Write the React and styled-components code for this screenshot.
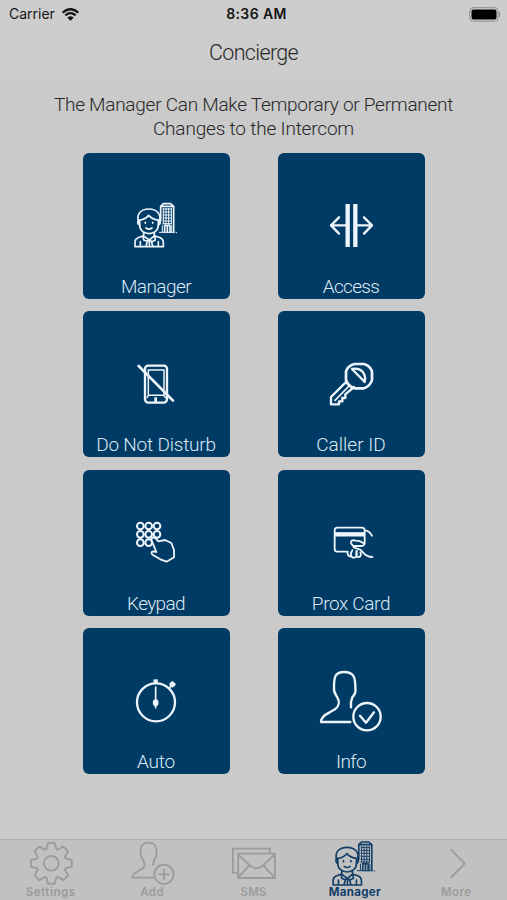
import React from "react";
import styled, { createGlobalStyle } from "styled-components";

const Global = createGlobalStyle`
  html, body { margin: 0; background: #cacaca; }
  * { box-sizing: border-box; }
`;

const Screen = styled.main`
  width: 507px;
  height: 900px;
  display: flex;
  flex-direction: column;
  background: #cacaca;
  color: #282828;
  font-family: Roboto, "Open Sans", sans-serif;
  font-weight: 300;
  overflow: hidden;
`;

const Header = styled.header`
  height: 80px;
  flex: none;
  background: #cdcdcd;
`;

const StatusBar = styled.div`
  height: 28px;
  padding: 0 6px 0 9px;
  display: grid;
  grid-template-columns: 1fr auto 1fr;
  align-items: center;
  color: #151515;
  font: 400 14px/28px Inter, sans-serif;
`;

const Carrier = styled.div`
  display: flex;
  align-items: center;
  gap: 7px;
`;

const Clock = styled.div`
  font-weight: 600;
  letter-spacing: 0.4px;
  padding-left: 3px;
`;

const BatterySlot = styled.div`
  display: flex;
  justify-content: flex-end;
`;

const Title = styled.h1`
  margin: 10px 0 0;
  text-align: center;
  font-size: 21.5px;
  line-height: 30px;
  font-weight: 300;
  letter-spacing: -0.65px;
`;

const Intro = styled.p`
  margin: 13px 0 0;
  text-align: center;
  font-size: 19px;
  line-height: 24px;
`;

const IntroLine = styled.span`
  display: block;
  white-space: nowrap;
  letter-spacing: ${(p) => p.$track}px;
`;

const Grid = styled.section`
  margin: 11.5px auto 0;
  display: grid;
  grid-template-columns: 147px 147px;
  grid-auto-rows: 146px;
  column-gap: 48px;
  row-gap: 12.5px;
`;

const Tile = styled.button`
  display: flex;
  flex-direction: column;
  align-items: center;
  justify-content: space-between;
  padding: ${(p) => p.$top}px 0 0;
  border: 0;
  border-radius: 6px;
  background: #003b66;
  color: #eef5fa;
  font: inherit;
`;

const TileLabel = styled.span`
  margin-bottom: -1px;
  color: #dce9f3;
  font-size: 19px;
  line-height: 26px;
  white-space: nowrap;
  letter-spacing: ${(p) => p.$track}px;
`;

const Glyph = styled.svg`
  display: block;
  flex: none;
  width: ${(p) => p.$w}px;
  height: ${(p) => p.$h}px;
  fill: none;
  stroke: currentColor;
  stroke-width: ${(p) => p.$stroke || 7};
  stroke-linejoin: round;
  stroke-linecap: round;
`;

const TabBar = styled.nav`
  margin-top: auto;
  height: 61px;
  flex: none;
  display: grid;
  grid-template-columns: repeat(5, 1fr);
  background: #c1c1c1;
  border-top: 1px solid #adadad;
`;

const Tab = styled.a`
  display: flex;
  flex-direction: column;
  align-items: center;
  color: ${(p) => (p.$active ? "#123f68" : "#9b9b9b")};
`;

const TabLabel = styled.span`
  margin-top: -2px;
  font: ${(p) => (p.$active ? 700 : 600)} 11.5px/14px Inter, sans-serif;
  letter-spacing: ${(p) => p.$track}px;
`;

const ManagerArt = () => (
  <g strokeWidth="5">
    <path d="M56 96c-8-24 7-39 31-39 23 0 38 15 31 39M56 90c-5 5-3 14 3 15M118 90c5 5 3 14-3 15" />
    <path d="M59 90c14-1 21-7 27-14 8 9 16 13 29 14v16c0 15-13 25-28 25s-28-10-28-25z" />
    <path d="M76 97v3M98 97v3M78 114q9 7 18 0" />
    <path d="M71 128v9l-17 6c-7 3-9 8-9 14v13h85v-13c0-7-3-11-9-14l-18-6v-9M69 137l19 13 16-13M69 137l2 13 10 4 7-4 8 5 10-5-2-13M82 154l-4 14M94 154l4 14M61 155v13M115 155v13M88 151v15" />
    <path d="M122 93V49l8-8h22l9 8v78M122 49h39M134 127v-21h16v21M142 107v20" />
    <path strokeWidth="3" d="M118 127h44M168 128h2M129 57h25M129 66h25M129 75h25M129 84h25M129 93h25M129 101h25M130 55v47M138 55v47M146 55v47M154 55v47M127 107v18M155 107v18" />
  </g>
);

const tiles = [
  {
    name: "Manager", track: -0.55, top: 37,
    art: <ManagerArt />,
  },
  {
    name: "Access", track: -0.65, top: 37,
    art: (
      <>
        <path strokeWidth="13" strokeLinecap="butt" d="M98 42v129M121 42v129" />
        <path d="M92 106H48M127 106h44M72 82l-24 24 24 25M147 82l24 24-24 25" />
      </>
    ),
  },
  {
    name: "Do Not Disturb", track: -0.2, top: 38.5,
    art: (
      <>
        <rect x="75" y="47" width="66" height="111" rx="10" />
        <path strokeWidth="4.5" d="M85 60h47v76H85zM85 137l-4 6M132 137l4 6" />
        <path strokeWidth="8" d="M107 145v10" />
        <path strokeWidth="8" d="M56 48l103 104" />
      </>
    ),
  },
  {
    name: "Caller ID", track: 0, top: 38.5,
    art: (
      <>
        <path strokeWidth="8" d="M118 42h29c14 4 20 10 24 22v26c-4 14-11 20-24 25h-29c-14-5-21-12-25-25V64c4-12 11-18 25-22z" />
        <path d="M111 57c26-6 44 13 38 39zM95 94l-47 47v22h24v-9h10v-10h9v-11l26-22" />
        <path strokeWidth="5" d="M60 151l42-43" />
      </>
    ),
  },
  {
    name: "Keypad", track: -0.65, top: 38,
    art: (
      <>
        <g strokeWidth="6">
          {[54, 79, 104].map((y) =>
            [61, 86, 111].map((x) =>
              x === 111 && y === 104 ? null : <circle key={`${x}-${y}`} cx={x} cy={y} r="10" />
            )
          )}
        </g>
        <path strokeWidth="5.5" d="M104 89c-7-2-12 2-9 9l14 34-10-2c-6 1-6 7 0 11l22 13 19 7 22-13v-22l-8-21-19-9-20 4-7-8z" />
      </>
    ),
  },
  {
    name: "Prox Card", track: -0.35, top: 38,
    art: (
      <g strokeWidth="5.5">
        <path d="M94 131H67q-8 0-8-8V67q0-8 8-8h74q8 0 8 8v40M149 67c11 0 15 6 22 16" />
        <path strokeWidth="13" strokeLinecap="butt" d="M59 79h91" />
        <path d="M172 147c-20 0-23-9-31-17-3-7-13-7-23-11-4-2-3-5 2-5l18 0c9 0 12-5 7-9-8-5-16-7-23-7-10-3-16 0-14 7 2 5 6 7 8 11M98 131c-2 9 3 15 13 15M112 127c-9 12-4 22 5 22s10-9 7-20M126 129c-5 10-3 18 4 18s10-6 6-14" />
      </g>
    ),
  },
  {
    name: "Auto", track: -0.2, top: 37,
    art: (
      <>
        <circle cx="108" cy="112" r="57" />
        <path strokeWidth="13" strokeLinecap="butt" d="M107 43v14" />
        <path strokeWidth="5" d="M107 66v62" />
        <ellipse cx="107" cy="113" rx="6.5" ry="8" fill="currentColor" stroke="none" />
        <ellipse cx="107" cy="113" rx="6.5" ry="8" strokeWidth="4" />
        <path strokeWidth="5" fill="currentColor" d="M151 56l6-5 8 7-7 7-7-4z" />
        <path strokeWidth="5" d="M148 69l6-6" />
      </>
    ),
  },
  {
    name: "Info", track: -0.6, top: 32, size: 84,
    art: (
      <g transform="translate(2 0)">
        <path d="M122 186H34c0-14 13-23 26-29l16-9c16-12 13-24 7-36-6-9-12-15-10-29 0-29 1-47 30-47 31 0 34 18 34 47 2 15-2 20-9 29-5 11-5 20-4 30" />
        <circle cx="172" cy="170" r="41" />
        <path d="M151 167l18 21 24-31" />
      </g>
    ),
  },
];

const gear = (() => {
  const teeth = [];
  for (let i = 0; i < 8; i += 1) {
    const base = (i * Math.PI) / 4 - Math.PI / 2;
    [[-0.34, 45], [-0.16, 62], [0.16, 62], [0.34, 45]].forEach(([a, r]) => {
      teeth.push(`${(154 + r * Math.cos(base + a)).toFixed(1)} ${(100 + r * Math.sin(base + a)).toFixed(1)}`);
    });
  }
  return `M${teeth.join("L")}Z`;
})();

const tabs = [
  {
    name: "Settings", track: 0.55, x: 0,
    art: (
      <>
        <path d={gear} />
        <circle cx="154" cy="100" r="22" />
      </>
    ),
  },
  {
    name: "Add", track: 0.4, x: 304.2,
    art: (
      <>
        <path d="M460 143h-62c0-10 8-15 18-20l14-8c8-7 5-17 0-26-7-9-8-13-7-24 0-18 5-27 24-27s24 9 24 27c1 11 0 15-7 24-3 6-3 11-3 16" />
        <circle cx="493" cy="133" r="29" />
        <path d="M479 133h28M493 119v28" />
      </>
    ),
  },
  {
    name: "SMS", track: 0.1, x: 608.4,
    art: (
      <>
        <path d="M708 128h-10V56h111v10" />
        <path d="M714 71h110v73H714zM714 74l37 34q18 14 36 0l36-34M714 142l34-36M823 142l-34-36" />
      </>
    ),
  },
  {
    name: "Manager", track: 0.3, x: 162.6, active: true,
    art: <g transform="translate(205 -5)"><ManagerArt /></g>,
  },
  {
    name: "More", track: 0.5, x: 466.8,
    art: <path d="M603 60l40 41-40 40" />,
  },
];

export default function App() {
  return (
    <Screen>
      <Global />
      <Header>
        <StatusBar>
          <Carrier>
            Carrier
            <Glyph $w={17} $h={13} viewBox="0 0 51 39" $stroke={7}>
              <path strokeLinecap="butt" d="M2 14Q25 -7 49 14M10 22q15-13 31 0" />
              <path stroke="none" fill="currentColor" d="M16 29q10-8 19 0l-9.500 9z" />
            </Glyph>
          </Carrier>
          <Clock>8:36 AM</Clock>
          <BatterySlot>
            <Glyph $w={32} $h={15} viewBox="0 0 32 15" $stroke={1}>
              <rect x="0.700" y="0.700" width="28.500" height="13.500" rx="3.500" stroke="#8c8c8c" />
              <rect x="2.500" y="2.500" width="25" height="10" rx="2" fill="#000" stroke="none" />
              <path d="M30.600 5.500v4" stroke="#8c8c8c" />
            </Glyph>
          </BatterySlot>
        </StatusBar>
        <Title>Concierge</Title>
      </Header>
      <Intro>
        <IntroLine $track={-0.26}>The Manager Can Make Temporary or Permanent</IntroLine>
        <IntroLine $track={-0.18}>Changes to the Intercom</IntroLine>
      </Intro>
      <Grid>
        {tiles.map((t) => (
          <Tile key={t.name} $top={t.top}>
            <Glyph $w={t.size || 72} $h={t.size || 72} viewBox={t.size ? "0 0 252 252" : "0 0 216 216"}>
              {t.art}
            </Glyph>
            <TileLabel $track={t.track}>{t.name}</TileLabel>
          </Tile>
        ))}
      </Grid>
      <TabBar>
        {tabs.map((t) => (
          <Tab key={t.name} $active={t.active}>
            <Glyph $w={101.4} $h={47} viewBox={`${t.x} 30 304.200 141`} $stroke={5.5}>
              {t.art}
            </Glyph>
            <TabLabel $active={t.active} $track={t.track}>{t.name}</TabLabel>
          </Tab>
        ))}
      </TabBar>
    </Screen>
  );
}
